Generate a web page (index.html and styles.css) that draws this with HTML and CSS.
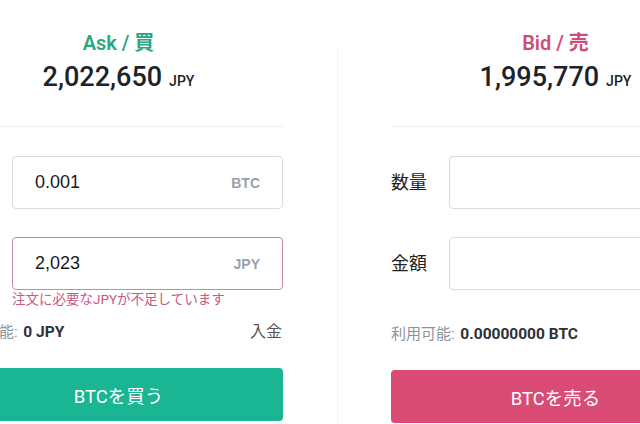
FILE: index.html
```html
<!DOCTYPE html>
<html lang="ja">
<head>
<meta charset="utf-8">
<link rel="stylesheet" href="styles.css">
</head>
<body>
<div class="wrap">
  <section class="col">
    <div class="head">
      <div class="title ask">Ask / 買</div>
      <div class="price">2,022,650<span class="cur">JPY</span></div>
    </div>
    <div class="form">
      <div class="row">
        <span class="label">数量</span>
        <div class="field"><span class="val">0.001</span><span class="unit">BTC</span></div>
      </div>
      <div class="row row2">
        <span class="label">金額</span>
        <div class="field error"><span class="val">2,023</span><span class="unit">JPY</span></div>
      </div>
      <div class="err">注文に必要なJPYが不足しています</div>
      <div class="avail avail-buy"><span><span class="avail-label">利用可能: </span><b>0 JPY</b></span><span class="deposit">入金</span></div>
      <button class="btn buy">BTCを買う</button>
    </div>
  </section>
  <div class="gutter"><div class="gutter-line"></div></div>
  <section class="col">
    <div class="head">
      <div class="title bid">Bid / 売</div>
      <div class="price">1,995,770<span class="cur">JPY</span></div>
    </div>
    <div class="form">
      <div class="row">
        <span class="label">数量</span>
        <div class="field"><span class="val"></span><span class="unit"></span></div>
      </div>
      <div class="row row2">
        <span class="label">金額</span>
        <div class="field"><span class="val"></span><span class="unit"></span></div>
      </div>
      <div class="avail avail-sell"><span><span class="avail-label">利用可能: </span><b>0.00000000 BTC</b></span></div>
      <button class="btn sell">BTCを売る</button>
    </div>
  </section>
</div>
</body>
</html>
```

FILE: styles.css
```css
html, body {
  margin: 0;
  padding: 0;
  background: #fff;
}
body {
  width: 640px;
  height: 424px;
  overflow: hidden;
  font-family: Roboto, "Noto Sans CJK JP", sans-serif;
  color: #1f2530;
}
.wrap {
  display: flex;
  margin-left: -46px;
  width: 900px;
}
.col {
  width: 329px;
  flex: none;
}
.gutter {
  width: 108px;
  flex: none;
  display: flex;
  justify-content: center;
  padding-top: 50px;
  height: 424px;
  box-sizing: border-box;
}
.gutter-line {
  border-left: 1px dotted #e6e6e6;
  height: 100%;
}
.head {
  text-align: center;
  padding-top: 30px;
  height: 127px;
  box-sizing: border-box;
  border-bottom: 1px solid #efefef;
}
.title {
  font-size: 20px;
  font-weight: 600;
  line-height: 26px;
}
.title.ask { color: #2aa882; }
.title.bid { color: #cf4c7d; }
.price {
  margin-top: 4px;
  font-size: 27px;
  font-weight: 500;
  line-height: 34px;
  color: #1d222b;
}
.cur {
  font-size: 14px;
  font-weight: 500;
  margin-left: 7px;
}
.form {
  padding-top: 29px;
}
.row {
  display: flex;
  align-items: center;
}
.row2 {
  margin-top: 28px;
}
.label {
  width: 58px;
  flex: none;
  font-size: 18px;
  color: #222;
  line-height: 22px;
}
.field {
  flex: 1;
  height: 53px;
  box-sizing: border-box;
  border: 1px solid #dcdcdc;
  border-radius: 4px;
  display: flex;
  align-items: center;
  justify-content: space-between;
  padding: 0 22px 0 22px;
  font-family: "Liberation Sans", Arial, sans-serif;
}
.field.error {
  border-color: #c98a9d;
}
.val {
  font-size: 18px;
  color: #1a1a1a;
}
.unit {
  font-size: 14px;
  font-weight: 700;
  color: #9ba1aa;
}
.err {
  margin-left: 58px;
  font-size: 13.5px;
  line-height: 18px;
  color: #c75a82;
}
.avail {
  display: flex;
  justify-content: space-between;
  align-items: center;
  font-size: 15px;
  line-height: 20px;
}
.avail-buy { margin-top: 14px; }
.avail-sell { margin-top: 34px; }
.avail-label {
  color: #8b93a0;
}
.avail b {
  color: #2c3038;
  font-weight: 700;
  font-size: 15.5px;
  margin-left: 2px;
}
.deposit {
  font-size: 16px;
  color: #555;
  margin-right: 1px;
}
.btn {
  display: block;
  width: 100%;
  height: 53px;
  margin-top: 26px;
  border: none;
  border-radius: 4px;
  color: #fff;
  font-family: Roboto, "Noto Sans CJK JP", sans-serif;
  font-size: 18.5px;
  padding: 0;
}
.btn.buy { background: #1ab593; }
.btn.sell { background: #d94a75; }
```
